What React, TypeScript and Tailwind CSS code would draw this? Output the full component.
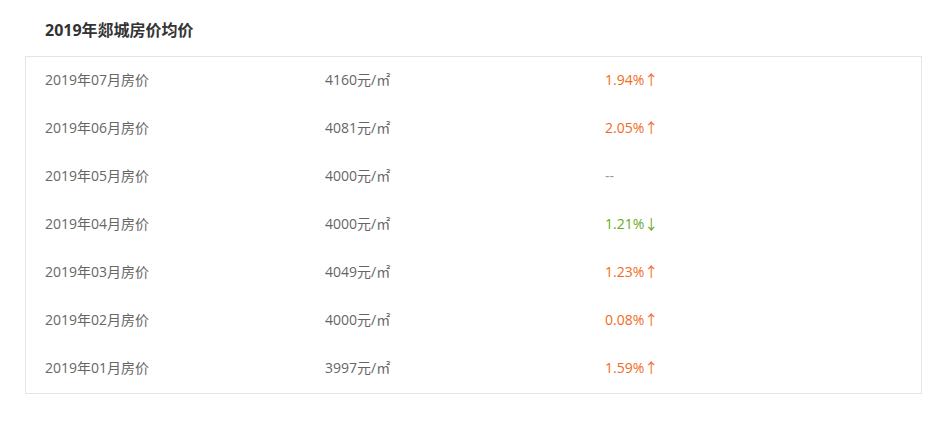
import React from "react";

const rows: { month: string; price: string; change: string; dir: "up" | "down" | "none" }[] = [
  { month: "2019年07月房价", price: "4160元/㎡", change: "1.94%↑", dir: "up" },
  { month: "2019年06月房价", price: "4081元/㎡", change: "2.05%↑", dir: "up" },
  { month: "2019年05月房价", price: "4000元/㎡", change: "--", dir: "none" },
  { month: "2019年04月房价", price: "4000元/㎡", change: "1.21%↓", dir: "down" },
  { month: "2019年03月房价", price: "4049元/㎡", change: "1.23%↑", dir: "up" },
  { month: "2019年02月房价", price: "4000元/㎡", change: "0.08%↑", dir: "up" },
  { month: "2019年01月房价", price: "3997元/㎡", change: "1.59%↑", dir: "up" },
];

export default function App() {
  return (
    <div
      className="w-[938px] h-[431px] bg-white pl-[25px] pr-[16px]"
      style={{ fontFamily: '"Open Sans", "Noto Sans CJK SC", sans-serif' }}
    >
      <div className="h-[56px] pt-[19px] pl-[20px]">
        <h2 className="text-[16px] leading-[22px] font-bold text-[#333]">2019年郯城房价均价</h2>
      </div>
      <div className="border border-[#e4e4e4]">
        {rows.map((r) => (
          <div key={r.month} className="h-[48px] flex items-center pb-[3px] pl-[19px] text-[14px] text-[#666]">
            <div className="w-[280px]">{r.month}</div>
            <div className="w-[280px]">{r.price}</div>
            <div
              className={
                r.dir === "up"
                  ? "text-[#f26a24]"
                  : r.dir === "down"
                  ? "text-[#6aaa22]"
                  : "text-[#999]"
              }
            >
              {r.change}
            </div>
          </div>
        ))}
      </div>
    </div>
  );
}
